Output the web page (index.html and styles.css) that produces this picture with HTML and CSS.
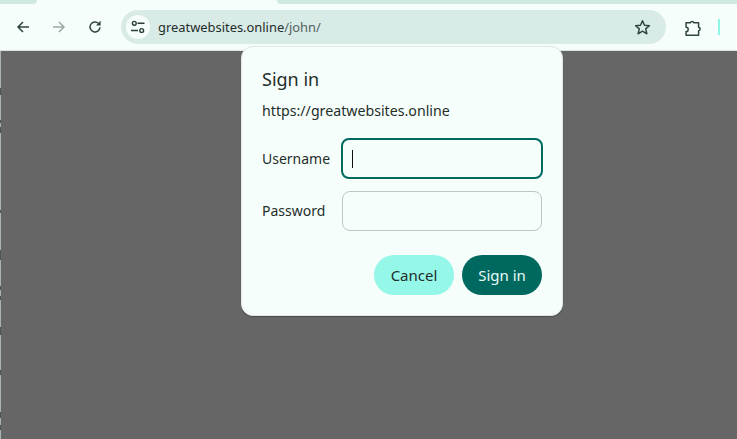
FILE: index.html
```html
<!DOCTYPE html>
<html>
    <head>
        <title>Sign in</title>
        <link rel="stylesheet" href="styles.css">
    </head>
    <body>
        <div class="tabstrip">
            <div class="tab tabLeft"></div>
            <div class="tab tabRight"></div>
        </div>
        <div class="toolbar">
            <svg class="navIcon" viewBox="0 0 16 16"><path d="M14 8H3M8 3 3 8l5 5" fill="none" stroke="#2f4440" stroke-width="1.5"/></svg>
            <svg class="navIcon" viewBox="0 0 16 16"><path d="M2 8h11M8 3l5 5-5 5" fill="none" stroke="#9aa8a5" stroke-width="1.5"/></svg>
            <svg class="navIcon" viewBox="0 0 16 16"><path d="M13 8.3A5 5 0 1 1 11.4 4.3" fill="none" stroke="#2f4440" stroke-width="1.5"/><path d="M13.6 1.8v4.6H9z" fill="#2f4440"/></svg>
            <div class="omnibox">
                <div class="siteInfo">
                    <svg width="16" height="16" viewBox="0 0 16 16"><g fill="none" stroke="#2a3b38" stroke-width="1.4"><circle cx="4.3" cy="4.3" r="1.9"/><path d="M7.5 4.3h7M1 11.5h7"/><circle cx="11.7" cy="11.5" r="1.9"/></g></svg>
                </div>
                <span class="url">greatwebsites.online<span class="urlPath">/john/</span></span>
                <svg class="star" viewBox="0 0 16 16"><path d="M8 1.6l1.9 4.3 4.6.4-3.5 3 1.1 4.6L8 11.5l-4.1 2.4 1.1-4.6-3.5-3 4.6-.4z" fill="none" stroke="#2f4440" stroke-width="1.4" stroke-linejoin="round"/></svg>
            </div>
            <svg class="puzzle" viewBox="0 0 16 16"><path d="M1 3.5h4a1.8 1.8 0 0 1 3.4 0h4.4V8a1.5 1.5 0 0 1 0 3v4.300H1v-3.500a1.800 1.800 0 0 0 0-4z" fill="none" stroke="#2f4440" stroke-width="1.4" stroke-linejoin="round"/></svg>
            <div class="divider"></div>
        </div>
        <div class="content"><div class="edge"></div></div>

        <div class="dialog">
            <h1 class="title">Sign in</h1>
            <p class="origin">https://greatwebsites.online</p>
            <div class="form">
                <label class="label" for="username">Username</label>
                <div class="field fieldFocus" id="username"><span class="caret"></span></div>
                <label class="label" for="password">Password</label>
                <div class="field" id="password"></div>
            </div>
            <div class="actions">
                <button class="btn cancel">Cancel</button>
                <button class="btn signIn">Sign in</button>
            </div>
        </div>
    </body>
</html>
```

FILE: styles.css
```css
html, body {
    height: 100%;
}
body {
    display: flex;
    flex-direction: column;
    margin: 0;
    overflow: hidden;
    background: #666;
    color: #1f2e2b;
    font-family: "Noto Sans", sans-serif;
    font-size: 14.2px;
}
.tabstrip {
    display: flex;
    justify-content: space-between;
    height: 4px;
    background: #f6fefb;
}
.tab {
    height: 4px;
    background: #cfe8e2;
}
.tabLeft {
    width: 37px;
    border-bottom-right-radius: 6px;
}
.tabRight {
    width: 460px;
    border-bottom-left-radius: 6px;
}
.toolbar {
    display: flex;
    align-items: center;
    height: 47px;
    padding-left: 15px;
    box-sizing: border-box;
    border-bottom: 1px solid #dbe5e2;
    background: #f6fefb;
}
.navIcon {
    width: 16px;
    height: 16px;
    margin-right: 20px;
}
.navIcon:nth-child(3) {
    margin-right: 18px;
}
.omnibox {
    display: flex;
    flex: none;
    align-items: center;
    width: 545px;
    height: 34px;
    margin-right: 19px;
    border-radius: 17px;
    background: #d9ebe7;
}
.siteInfo {
    display: flex;
    justify-content: center;
    align-items: center;
    width: 24px;
    height: 24px;
    margin: 0 8px 0 5px;
    border-radius: 50%;
    background: #f6fefb;
}
.url {
    flex: 1;
    color: #1f2e2b;
    font-size: 12.9px;
}
.urlPath {
    color: #53625f;
}
.star {
    width: 17px;
    height: 17px;
    margin-right: 15px;
}
.puzzle {
    width: 17px;
    height: 17px;
    margin-right: 16px;
}
.divider {
    width: 2px;
    height: 16px;
    background: #8ff5e4;
}
.content {
    flex: 1;
}
.edge {
    width: 1px;
    height: 100%;
    background: linear-gradient(#a9b3b1 37px, #4c5654 37px, #4c5654 44px, #a9b3b1 44px, #a9b3b1 69px, #4c5654 69px, #4c5654 72px, #a9b3b1 72px, #a9b3b1 76px, #4c5654 76px, #4c5654 82px, #a9b3b1 82px, #a9b3b1 159px, #4c5654 159px, #4c5654 162px, #a9b3b1 162px, #a9b3b1 199px, #4c5654 199px, #4c5654 209px, #a9b3b1 209px, #a9b3b1 235px, #4c5654 235px, #4c5654 239px, #a9b3b1 239px, #a9b3b1 245px, #4c5654 245px, #4c5654 249px, #a9b3b1 249px, #a9b3b1 276px, #4c5654 276px, #4c5654 284px, #a9b3b1 284px, #a9b3b1 319px, #4c5654 319px, #4c5654 324px, #a9b3b1 324px, #a9b3b1 361px, #4c5654 361px, #4c5654 367px, #a9b3b1 367px, #a9b3b1 374px, #4c5654 374px, #4c5654 379px, #a9b3b1 379px);
}
.dialog {
    position: absolute;
    top: 46px;
    left: 241px;
    display: flex;
    flex-direction: column;
    width: 322px;
    height: 270px;
    padding: 19px 20px 20px;
    box-sizing: border-box;
    border: 1px solid #dfe6e4;
    border-radius: 12px;
    background: #f6fefb;
    box-shadow: 0 1px 1px rgba(0, 0, 0, .25);
}
.title {
    margin: 0;
    font-size: 18px;
    font-weight: 400;
    line-height: 26px;
}
.origin {
    margin: 9px 0 0;
    line-height: 20px;
}
.form {
    display: grid;
    grid-template-columns: 80px 200px;
    grid-auto-rows: 40px;
    gap: 12px 0;
    align-items: center;
    margin-top: 18px;
}
.label {
    padding-bottom: 2px;
    font-size: 14px;
}
.field {
    display: flex;
    align-items: center;
    height: 40px;
    padding-left: 9px;
    box-sizing: border-box;
    border: 1px solid #bcc6c4;
    border-radius: 8px;
}
.fieldFocus {
    height: 41px;
    margin: -1px -1px 0;
    border: 2px solid #00695f;
}
.caret {
    width: 1px;
    height: 18px;
    background: #111;
}
.actions {
    display: flex;
    justify-content: flex-end;
    gap: 8px;
    margin-top: 24px;
}
.btn {
    width: 80px;
    height: 40px;
    padding: 0;
    border: none;
    border-radius: 20px;
    font-family: inherit;
    font-size: 15px;
}
.cancel {
    background: #95f7e8;
    color: #1f2e2b;
}
.signIn {
    background: #00695f;
    color: #e8fbf6;
}
```
